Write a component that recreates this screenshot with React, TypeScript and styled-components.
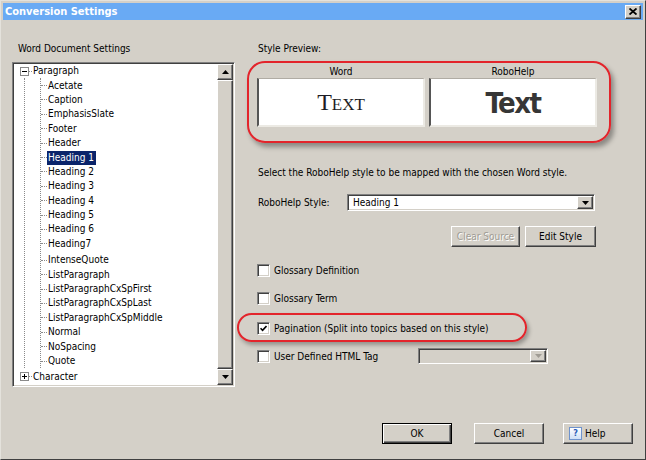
import React from "react";
import styled, { createGlobalStyle, css } from "styled-components";

const UI = `"DejaVu Sans Condensed", "Liberation Sans", sans-serif`;

const Global = createGlobalStyle`
  html, body { margin: 0; padding: 0; background: #d4d0c8; }
  body { font-family: ${UI}; }
  * { box-sizing: border-box; }
`;

const raised = css`
  background: #d4d0c8;
  border: 1px solid;
  border-color: #ffffff #404040 #404040 #ffffff;
  box-shadow: inset -1px -1px 0 #808080;
`;

const sunken = css`
  border: 1px solid;
  border-color: #808080 #ffffff #ffffff #808080;
  box-shadow: inset 1px 1px 0 #404040, inset -1px -1px 0 #d4d0c8;
`;

const Window = styled.div`
  width: 646px;
  height: 460px;
  display: flex;
  flex-direction: column;
  background: #d4d0c8;
  border: 1px solid;
  border-color: #e4e2dc #404040 #404040 #e4e2dc;
  padding: 2px;
  font-family: ${UI};
  font-size: 10px;
  color: #000;
`;

const TitleBar = styled.div`
  height: 17px;
  flex: none;
  display: flex;
  align-items: center;
  justify-content: space-between;
  padding: 0 2px 0 2px;
  background: #69aaf4;
`;

const Title = styled.span`
  color: #fff;
  font-weight: bold;
  font-size: 11px;
  line-height: 17px;
`;

const CloseButton = styled.div`
  ${raised};
  width: 16px;
  height: 14px;
  display: flex;
  align-items: center;
  justify-content: center;
`;

const Main = styled.div`
  flex: 1;
  display: grid;
  grid-template-columns: 223px 364px;
  column-gap: 12px;
  align-content: start;
  padding: 22px 0 0 9px;
`;

const Column = styled.div`
  display: flex;
  flex-direction: column;
`;

const GroupLabel = styled.div<{ $indent: number }>`
  height: 14px;
  line-height: 14px;
  padding-left: ${(p) => p.$indent}px;
`;

const TreeBox = styled.div`
  ${sunken};
  margin-top: 6px;
  height: 325px;
  padding: 1px;
  background: #fff;
  display: flex;
`;

const TreeList = styled.div`
  flex: 1;
  padding-left: 6px;
  overflow: hidden;
`;

const Row = styled.div<{ $gap?: number }>`
  display: flex;
  align-items: center;
  height: 14.4px;
  margin-top: ${(p) => p.$gap ?? 0}px;
  white-space: nowrap;
`;

const Stub = styled.span<{ $w: number }>`
  display: block;
  width: ${(p) => p.$w}px;
  height: 0;
  border-top: 1px dotted #8a8a8a;
  flex: none;
`;

const Expander = styled.svg`
  flex: none;
  display: block;
`;

const NodeLabel = styled.span<{ $selected?: boolean }>`
  display: block;
  height: 14px;
  line-height: 14px;
  padding: 0 2px 0 1px;
  background: ${(p) => (p.$selected ? "#0a246a" : "transparent")};
  color: ${(p) => (p.$selected ? "#fff" : "#000")};
`;

const Branch = styled.div`
  margin-left: 4px;
  border-left: 1px dotted #8a8a8a;
`;

const Children = styled.div`
  margin-left: 15px;
  border-left: 1px dotted #8a8a8a;
`;

const ScrollBar = styled.div`
  width: 16px;
  flex: none;
  display: flex;
  flex-direction: column;
  background: #e6e4df;
`;

const ScrollButton = styled.div`
  ${raised};
  height: 16px;
  flex: none;
  display: flex;
  align-items: center;
  justify-content: center;
`;

const ScrollThumb = styled.div`
  ${raised};
  flex: 1;
`;

const PreviewFrame = styled.div`
  margin-top: 5px;
  height: 82px;
  border: 2px solid #e3242b;
  border-radius: 18px;
  box-shadow: 3px 4px 5px rgba(0, 0, 0, 0.35);
  padding: 3px 12px 0 8px;
  display: grid;
  grid-template-columns: 168px 168px;
  grid-template-rows: 12px 49px;
  column-gap: 4px;
  grid-auto-flow: column;
`;

const PreviewCaption = styled.div`
  text-align: center;
  line-height: 12px;
`;

const PreviewBox = styled.div`
  background: #fff;
  border-style: solid;
  border-width: 1px 2px 2px 2px;
  border-color: #b0aca4 #eceae4 #eceae4 #555;
  display: flex;
  align-items: center;
  justify-content: center;
`;

const WordSample = styled.span`
  font-family: "Liberation Serif", serif;
  font-variant: small-caps;
  font-size: 24px;
  color: #1c1c24;
`;

const RoboSample = styled.span`
  font-family: "DejaVu Sans Condensed", "DejaVu Sans", sans-serif;
  font-weight: bold;
  font-size: 29px;
  letter-spacing: -1.5px;
  color: #363636;
  margin-top: 2px;
`;

const Instruction = styled.div`
  margin-top: 23px;
  height: 14px;
  line-height: 14px;
  padding-left: 11px;
`;

const StyleRow = styled.div`
  margin-top: 14px;
  height: 17px;
  display: flex;
  align-items: center;
  padding-left: 11px;
`;

const FieldLabel = styled.span<{ $w: number }>`
  width: ${(p) => p.$w}px;
  flex: none;
`;

const Select = styled.div<{ $disabled?: boolean; $w: number; $h: number }>`
  ${sunken};
  width: ${(p) => p.$w}px;
  height: ${(p) => p.$h}px;
  padding: 1px;
  display: flex;
  background: ${(p) => (p.$disabled ? "#d4d0c8" : "#fff")};
`;

const SelectValue = styled.span`
  flex: 1;
  padding-left: 4px;
  line-height: 13px;
`;

const DropButton = styled.div`
  ${raised};
  width: 16px;
  flex: none;
  display: flex;
  align-items: center;
  justify-content: center;
`;

const ButtonRow = styled.div`
  margin-top: 15px;
  display: flex;
  justify-content: flex-end;
  gap: 5px;
  padding-right: 15px;
`;

const Button = styled.div<{ $w: number; $default?: boolean; $disabled?: boolean; $left?: boolean }>`
  width: ${(p) => p.$w}px;
  height: 21px;
  display: flex;
  align-items: center;
  justify-content: ${(p) => (p.$left ? "flex-start" : "center")};
  padding-left: ${(p) => (p.$left ? "5px" : "0")};
  gap: 3px;
  background: #d4d0c8;
  border: 1px solid;
  border-color: ${(p) => (p.$default ? "#000" : "#ffffff #404040 #404040 #ffffff")};
  box-shadow: ${(p) =>
    p.$default
      ? "inset 1px 1px 0 #fff, inset -1px -1px 0 #404040, inset -2px -2px 0 #808080"
      : "inset -1px -1px 0 #808080"};
  color: ${(p) => (p.$disabled ? "#a09c94" : "#000")};
  text-shadow: ${(p) => (p.$disabled ? "1px 1px 0 #fff" : "none")};
  flex: none;
`;

const CheckRow = styled.div<{ $gap: number; $h?: number }>`
  margin-top: ${(p) => p.$gap}px;
  height: ${(p) => p.$h ?? 14}px;
  display: flex;
  align-items: center;
  padding-left: 10px;
`;

const CheckBox = styled.span`
  ${sunken};
  width: 13px;
  height: 13px;
  background: #fff;
  flex: none;
  display: flex;
  align-items: center;
  justify-content: center;
  margin-right: 4px;
`;

const Highlight = styled.div`
  margin: 8px 0 0 -10px;
  width: 290px;
  height: 29px;
  border: 2px solid #e3242b;
  border-radius: 15px;
  box-shadow: 2px 3px 4px rgba(0, 0, 0, 0.3);
  padding: 6px 0 0 8px;
`;

const Footer = styled.div`
  flex: none;
  display: flex;
  justify-content: flex-end;
  gap: 0;
  padding: 0 10px 13px 0;
`;

const FooterButtonSlot = styled.div<{ $after: number }>`
  margin-right: ${(p) => p.$after}px;
`;

const HelpIcon = styled.span`
  width: 13px;
  height: 13px;
  border: 1px solid #6f93cc;
  background: linear-gradient(#ffffff, #cfe0f6);
  color: #2a5db8;
  font-weight: bold;
  font-size: 9px;
  line-height: 11px;
  text-align: center;
  flex: none;
`;

const Arrow = ({ down, color = "#000" }: { down?: boolean; color?: string }) => (
  <svg width="7" height="4" viewBox="0 0 7 4">
    <path d={down ? "M0 0H7L3.5 4Z" : "M0 4H7L3.5 0Z"} fill={color} />
  </svg>
);

const ExpanderIcon = ({ open }: { open: boolean }) => (
  <Expander width="9" height="9" viewBox="0 0 9 9">
    <rect x="0.5" y="0.5" width="8" height="8" fill="#fff" stroke="#8a8a8a" />
    <path d="M2 4.5H7" stroke="#000" />
    {!open && <path d="M4.5 2V7" stroke="#000" />}
  </Expander>
);

const styles = [
  "Acetate",
  "Caption",
  "EmphasisSlate",
  "Footer",
  "Header",
  "Heading 1",
  "Heading 2",
  "Heading 3",
  "Heading 4",
  "Heading 5",
  "Heading 6",
  "Heading7",
  "IntenseQuote",
  "ListParagraph",
  "ListParagraphCxSpFirst",
  "ListParagraphCxSpLast",
  "ListParagraphCxSpMiddle",
  "Normal",
  "NoSpacing",
  "Quote",
];

export default function App() {
  return (
    <>
      <Global />
      <Window>
        <TitleBar>
          <Title>Conversion Settings</Title>
          <CloseButton>
            <svg width="8" height="7" viewBox="0 0 8 7">
              <path d="M0.5 0.5L7.5 6.5M7.5 0.5L0.5 6.5" stroke="#000" strokeWidth="1.8" />
            </svg>
          </CloseButton>
        </TitleBar>
        <Main>
          <Column>
            <GroupLabel $indent={6}>Word Document Settings</GroupLabel>
            <TreeBox>
              <TreeList>
                <Row>
                  <ExpanderIcon open />
                  <Stub $w={3} />
                  <NodeLabel>Paragraph</NodeLabel>
                </Row>
                <Branch>
                  <Children>
                    {styles.map((s) => (
                      <Row key={s} $gap={s === "IntenseQuote" ? 2 : 0}>
                        <Stub $w={6} />
                        <NodeLabel $selected={s === "Heading 1"}>{s}</NodeLabel>
                      </Row>
                    ))}
                  </Children>
                </Branch>
                <Row $gap={1.6}>
                  <ExpanderIcon open={false} />
                  <Stub $w={3} />
                  <NodeLabel>Character</NodeLabel>
                </Row>
              </TreeList>
              <ScrollBar>
                <ScrollButton>
                  <Arrow />
                </ScrollButton>
                <ScrollThumb />
                <ScrollButton>
                  <Arrow down />
                </ScrollButton>
              </ScrollBar>
            </TreeBox>
          </Column>
          <Column>
            <GroupLabel $indent={11}>Style Preview:</GroupLabel>
            <PreviewFrame>
              <PreviewCaption>Word</PreviewCaption>
              <PreviewBox>
                <WordSample>Text</WordSample>
              </PreviewBox>
              <PreviewCaption>RoboHelp</PreviewCaption>
              <PreviewBox>
                <RoboSample>Text</RoboSample>
              </PreviewBox>
            </PreviewFrame>
            <Instruction>Select the RoboHelp style to be mapped with the chosen Word style.</Instruction>
            <StyleRow>
              <FieldLabel $w={89}>RoboHelp Style:</FieldLabel>
              <Select $w={248} $h={17}>
                <SelectValue>Heading 1</SelectValue>
                <DropButton>
                  <Arrow down />
                </DropButton>
              </Select>
            </StyleRow>
            <ButtonRow>
              <Button $w={69} $disabled>
                Clear Source
              </Button>
              <Button $w={71}>Edit Style</Button>
            </ButtonRow>
            <CheckRow $gap={16}>
              <CheckBox />
              <span>Glossary Definition</span>
            </CheckRow>
            <CheckRow $gap={14}>
              <CheckBox />
              <span>Glossary Term</span>
            </CheckRow>
            <Highlight>
              <CheckRow $gap={0}>
                <CheckBox>
                  <svg width="7" height="7" viewBox="0 0 7 7">
                    <path d="M0.5 3.2L2.6 5.4L6.5 1" stroke="#000" strokeWidth="1.6" fill="none" />
                  </svg>
                </CheckBox>
                <span>Pagination (Split into topics based on this style)</span>
              </CheckRow>
            </Highlight>
            <CheckRow $gap={6} $h={16}>
              <CheckBox />
              <FieldLabel $w={144}>User Defined HTML Tag</FieldLabel>
              <Select $w={130} $h={16} $disabled>
                <SelectValue />
                <DropButton>
                  <Arrow down color="#a09c94" />
                </DropButton>
              </Select>
            </CheckRow>
          </Column>
        </Main>
        <Footer>
          <FooterButtonSlot $after={22}>
            <Button $w={70} $default>
              OK
            </Button>
          </FooterButtonSlot>
          <FooterButtonSlot $after={19}>
            <Button $w={70}>Cancel</Button>
          </FooterButtonSlot>
          <FooterButtonSlot $after={0}>
            <Button $w={70} $left>
              <HelpIcon>?</HelpIcon>
              Help
            </Button>
          </FooterButtonSlot>
        </Footer>
      </Window>
    </>
  );
}
